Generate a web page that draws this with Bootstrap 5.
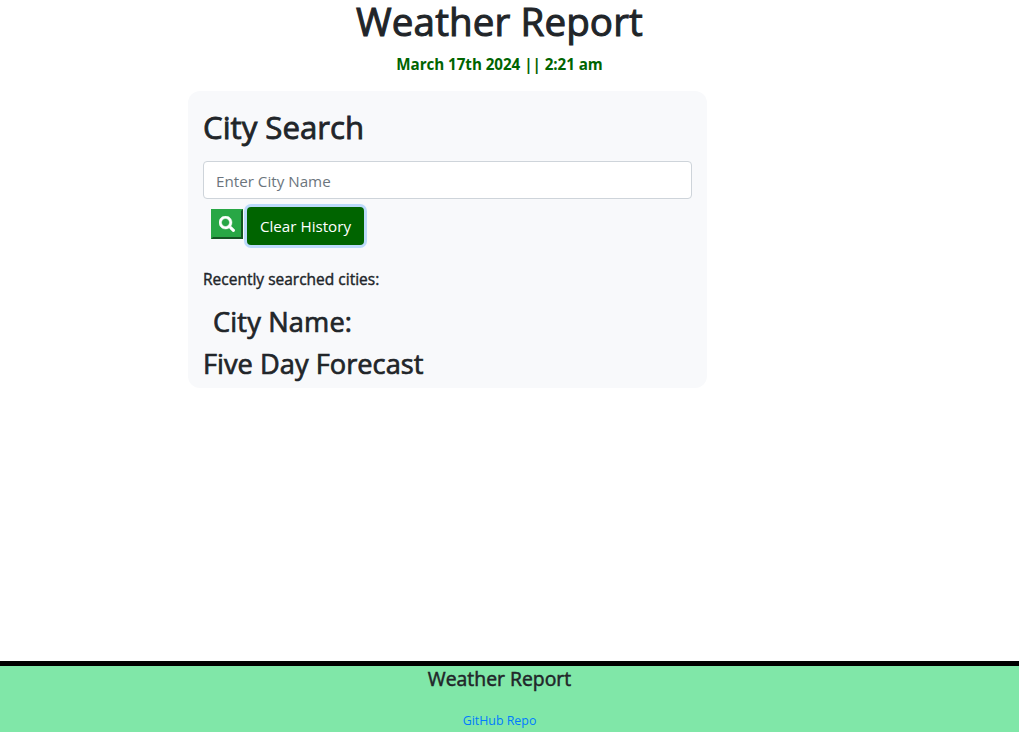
<!DOCTYPE html>
<html lang="en">
<head>
<meta charset="utf-8">
<meta name="viewport" content="width=device-width, initial-scale=1">
<title>Weather Report</title>
<link href="https://cdn.jsdelivr.net/npm/bootstrap@5.3.0/dist/css/bootstrap.min.css" rel="stylesheet">
<style>
  body { font-family: "Open Sans", "Noto Sans", sans-serif; color: #212529; padding-right: 20px; }
  h1, h2, h3, h4, .recent-label { font-weight: 400; -webkit-text-stroke: .026em currentColor; }
  h1 { font-size: 38.6px; line-height: 43px; letter-spacing: .1px; }
  h2 { font-size: 31.2px; line-height: 36px; letter-spacing: 0; }
  h3 { font-size: 27.2px; line-height: 34px; letter-spacing: .04px; }
  .today { font-size: 15.2px; font-weight: 700; color: #006400; letter-spacing: -.05px; line-height: 24px; margin-top: 9px; }
  .search-panel { width: 519px; height: 297px; margin: 15px 0 0 188px; padding: 18px 15px 0; background: #f8f9fb; border-radius: 12px; }
  .city-input { height: 38px; margin-top: 16px; padding: 8px 12px 6px; border-color: #ced4da; border-radius: 4px; font-size: 15.2px; line-height: 24px; }
  .city-input::placeholder { color: #6c757d; }
  .search-btn { width: 32px; height: 30px; margin: 2px 4px 0 8px; padding: 0; background: #28a745; border: 2px solid #28a745; border-right-color: #145523; border-bottom-color: #145523; }
  .clear-btn, .clear-btn:hover { width: 117px; height: 38px; padding: 0; border: 0; border-radius: 4px; background: #006400; color: #fff; font-size: 15.2px; box-shadow: 0 0 0 3px #bcdafb; }
  .recent-label { font-size: 15.5px; line-height: 19px; margin: 25px 0 0; }
  .city-name { margin: 16px 0 0 10px; letter-spacing: .16px; }
  .site-footer { height: 71px; margin-right: -20px; padding-right: 20px; background: #80e7a8; border-top: 5px solid #000; }
  .site-footer h4 { font-size: 19.4px; line-height: 24px; margin-top: 1px; }
  .site-footer a { font-size: 12.4px; color: #007bff; line-height: 18px; margin-top: 21px; }
</style>
</head>
<body class="d-flex flex-column min-vh-100">
  <header class="text-center">
    <h1 class="mb-0">Weather Report</h1>
    <div class="today">March 17th 2024 || 2:21 am</div>
  </header>
  <main class="flex-grow-1">
    <section class="search-panel">
      <h2 class="mb-0">City Search</h2>
      <input type="text" class="form-control city-input" placeholder="Enter City Name" aria-label="City name">
      <div class="d-flex align-items-start mt-2">
        <button type="button" class="search-btn d-flex align-items-center justify-content-center" aria-label="Search">
          <svg width="16" height="16" viewBox="0 0 512 512" fill="#fff" stroke="#fff" stroke-width="14" aria-hidden="true"><path d="M505 442.700 405.300 343c-4.500-4.500-10.600-7-17-7H372c27.600-35.300 44-79.700 44-128C416 93.100 322.900 0 208 0S0 93.100 0 208s93.100 208 208 208c48.300 0 92.700-16.400 128-44v16.300c0 6.400 2.500 12.500 7 17l99.700 99.700c9.400 9.400 24.600 9.400 33.900 0l28.300-28.300c9.400-9.400 9.400-24.600.1-34zM208 336c-70.700 0-128-57.200-128-128 0-70.700 57.200-128 128-128 70.700 0 128 57.200 128 128 0 70.700-57.200 128-128 128z"/></svg>
        </button>
        <button type="button" class="btn clear-btn">Clear History</button>
      </div>
      <p class="recent-label">Recently searched cities:</p>
      <h3 class="city-name">City Name:</h3>
      <h3 class="mt-2 mb-0">Five Day Forecast</h3>
    </section>
  </main>
  <footer class="site-footer d-flex flex-column align-items-center">
    <h4 class="mb-0">Weather Report</h4>
    <a href="#" class="text-decoration-none">GitHub Repo</a>
  </footer>
<script src="https://cdn.jsdelivr.net/npm/bootstrap@5.3.0/dist/js/bootstrap.bundle.min.js"></script>
</body>
</html>
